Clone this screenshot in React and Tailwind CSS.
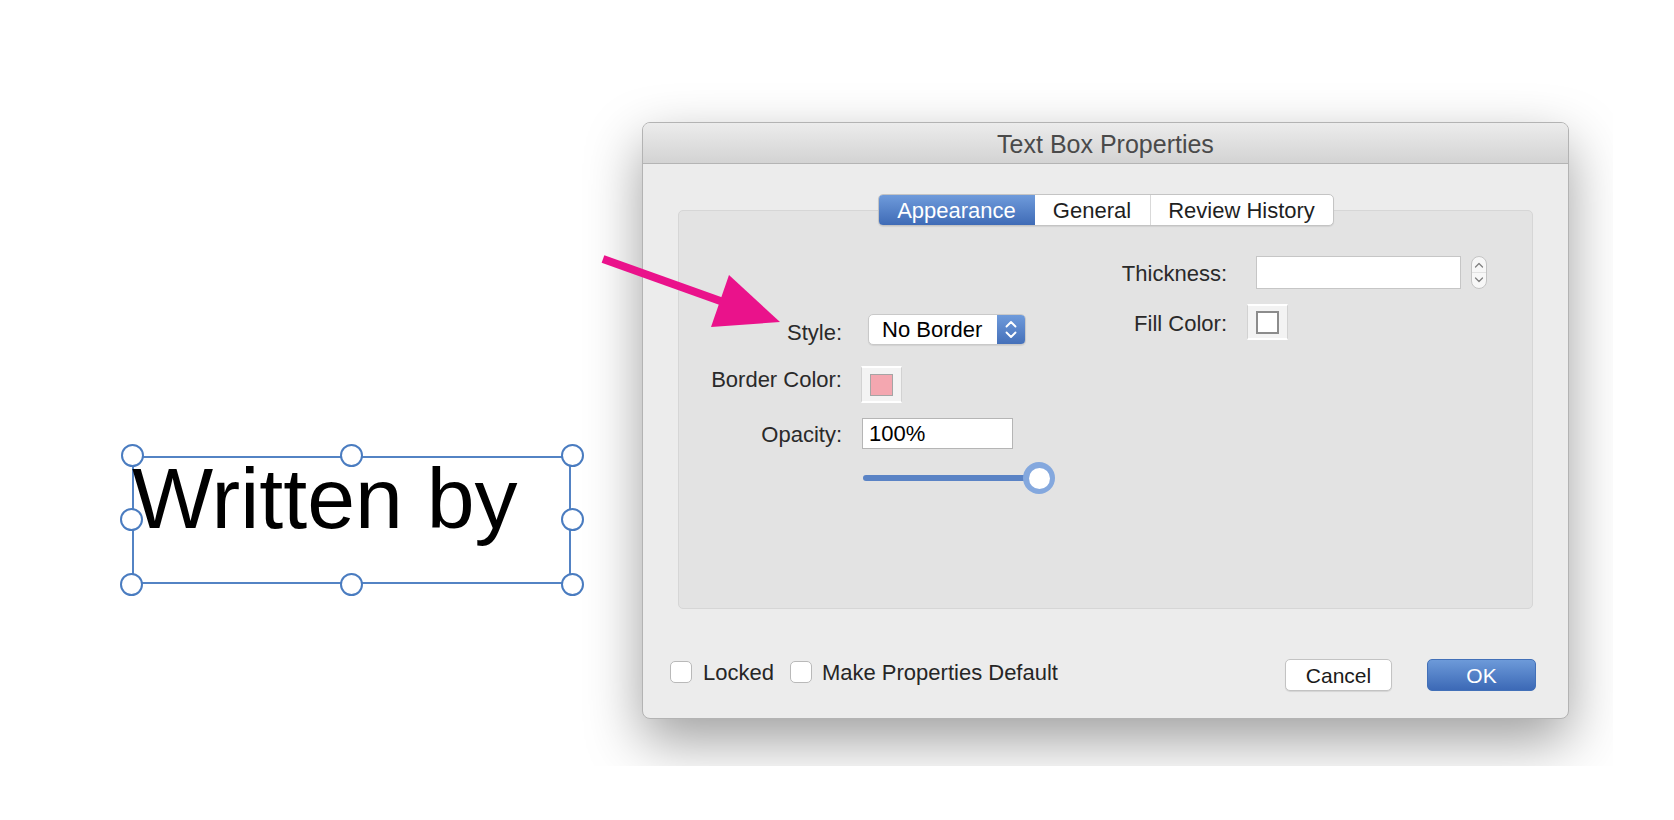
import React from "react";

function Handle({ cls }) {
  return (
    <div
      className={`absolute w-[23px] h-[23px] rounded-full border-2 border-[#4a7cc0] bg-white ${cls}`}
    />
  );
}

function UpDownWhite() {
  return (
    <svg width="28" height="31" viewBox="0 0 28 31" fill="none">
      <path d="M9.5 12.5 L14 8 L18.5 12.5" stroke="white" strokeWidth="1.9" strokeLinecap="round" strokeLinejoin="round" />
      <path d="M9.5 18.5 L14 23 L18.5 18.5" stroke="white" strokeWidth="1.9" strokeLinecap="round" strokeLinejoin="round" />
    </svg>
  );
}

function Stepper() {
  return (
    <svg width="16" height="33" viewBox="0 0 16 33" fill="none">
      <rect x="0.5" y="0.5" width="15" height="32" rx="7.5" fill="#f7f7f7" stroke="#c4c4c4" />
      <line x1="1" y1="16.5" x2="15" y2="16.5" stroke="#e2e2e2" />
      <path d="M4.5 11 L8 7.5 L11.5 11" stroke="#808080" strokeWidth="1.3" strokeLinecap="round" strokeLinejoin="round" />
      <path d="M4.5 22 L8 25.5 L11.5 22" stroke="#808080" strokeWidth="1.3" strokeLinecap="round" strokeLinejoin="round" />
    </svg>
  );
}

export default function App() {
  return (
    <div className="relative w-[1674px] h-[820px] bg-white overflow-hidden font-['Liberation_Sans',Arial,sans-serif]">
      {/* Text box on canvas */}
      <div className="absolute left-[132px] top-[456px] w-[439px] h-[128px] border-2 border-[#5383c4]">
        <div className="ml-[-2px] mt-[-3px] text-[86px] leading-none text-black whitespace-nowrap">
          Written by
        </div>
        <Handle cls="left-[-13px] top-[-14px]" />
        <Handle cls="left-[206px] top-[-14px]" />
        <Handle cls="left-[427px] top-[-14px]" />
        <Handle cls="left-[-14px] top-[50px]" />
        <Handle cls="left-[427px] top-[50px]" />
        <Handle cls="left-[-14px] top-[115px]" />
        <Handle cls="left-[206px] top-[115px]" />
        <Handle cls="left-[427px] top-[115px]" />
      </div>

      {/* Window with shadow, cropped */}
      <div className="absolute left-[582px] top-[40px] w-[1031px] h-[726px] overflow-hidden pl-[60px] pt-[82px]">
        <div className="w-[927px] h-[597px] rounded-[8px] border border-[#b3b3b3] bg-[#ececec] shadow-[0_22px_55px_rgba(0,0,0,0.38)] flex flex-col">
          {/* Title bar */}
          <div className="h-[41px] shrink-0 rounded-t-[7px] border-b border-[#b4b4b4] bg-gradient-to-b from-[#ececec] to-[#d3d3d3] flex justify-center pt-[7px]">
            <span className="text-[25px] leading-[29px] text-[#4a4a4a]">Text Box Properties</span>
          </div>

          {/* Body */}
          <div className="flex flex-col pt-[30px]">
            {/* Tabs */}
            <div className="relative z-10 flex justify-center">
              <div className="flex h-[32px] rounded-[5px] border border-[#c4c4c4] bg-white overflow-hidden shadow-[0_1px_1px_rgba(0,0,0,0.08)]">
                <div className="w-[156px] flex items-center justify-center bg-gradient-to-b from-[#6f9bdb] to-[#3f6bb6] text-white text-[22px] leading-[25px]">
                  Appearance
                </div>
                <div className="w-[116px] flex items-center justify-center border-r border-[#d9d9d9] text-[#1f1f1f] text-[22px] leading-[25px]">
                  General
                </div>
                <div className="w-[182px] flex items-center justify-center text-[#1f1f1f] text-[22px] leading-[25px]">
                  Review History
                </div>
              </div>
            </div>

            {/* Panel */}
            <div className="mx-[35px] mt-[-16px] h-[399px] rounded-[5px] bg-[#e3e3e3] border border-[#d6d6d6] flex text-[22px] leading-[25px] text-[#2a2a2a]">
              {/* Left column */}
              <div className="w-[400px] pt-[103px] flex flex-col">
                <div className="flex h-[31px]">
                  <div className="w-[163px] text-right pt-[6px]">Style:</div>
                  <div className="ml-[26px] w-[158px] h-[31px] flex rounded-[5px] bg-white border border-[#c9c9c9] shadow-[0_1px_1px_rgba(0,0,0,0.08)] overflow-hidden">
                    <div className="flex-1 pl-[13px] flex items-center text-black">No Border</div>
                    <div className="w-[28px] bg-gradient-to-b from-[#6f9bdb] to-[#4570b9] flex items-center justify-center">
                      <UpDownWhite />
                    </div>
                  </div>
                </div>

                <div className="flex h-[37px] mt-[21px]">
                  <div className="w-[163px] text-right pt-[1px]">Border Color:</div>
                  <div className="ml-[19px] w-[41px] h-[37px] bg-[#f3f3f3] border-x border-[#d2d2d2] border-y-2 border-y-white flex items-center justify-center">
                    <div className="w-[23px] h-[22px] bg-[#f4a7b0] border border-[#a5a5a5]" />
                  </div>
                </div>

                <div className="flex h-[31px] mt-[15px]">
                  <div className="w-[163px] text-right pt-[4px]">Opacity:</div>
                  <div className="ml-[20px] w-[151px] h-[31px] bg-white border border-[#b5b5b5] pl-[6px] flex items-center text-black">
                    100%
                  </div>
                </div>

                <div className="flex h-[32px] mt-[13px]">
                  <div className="w-[163px]" />
                  <div className="relative ml-[21px] w-[192px] h-[32px]">
                    <div className="absolute left-0 top-[13px] w-[178px] h-[6px] rounded-full bg-[#5a83c5]" />
                    <div className="absolute left-[160px] top-0 w-[32px] h-[32px] rounded-full bg-[#84a8de] flex items-center justify-center">
                      <div className="w-[21px] h-[21px] rounded-full bg-white" />
                    </div>
                  </div>
                </div>
              </div>

              {/* Right column */}
              <div className="pt-[45px] flex flex-col">
                <div className="flex h-[33px]">
                  <div className="w-[148px] text-right pt-[5px]">Thickness:</div>
                  <div className="ml-[29px] w-[205px] h-[33px] bg-white border border-[#c6c6c6]" />
                  <div className="ml-[10px]">
                    <Stepper />
                  </div>
                </div>
                <div className="flex h-[36px] mt-[15px]">
                  <div className="w-[148px] text-right pt-[7px]">Fill Color:</div>
                  <div className="ml-[20px] w-[41px] h-[36px] bg-[#f3f3f3] border-x border-[#d2d2d2] border-y-2 border-y-white flex items-center justify-center">
                    <div className="w-[23px] h-[23px] bg-white border-2 border-[#8c8c8c]" />
                  </div>
                </div>
              </div>
            </div>

            {/* Bottom row */}
            <div className="mt-[50px] h-[32px] flex items-start text-[22px] leading-[25px] text-[#262626]">
              <div className="ml-[27px] mt-[2px] w-[22px] h-[22px] rounded-[5px] bg-white border border-[#b9b9b9]" />
              <div className="ml-[11px] mt-[1px]">Locked</div>
              <div className="ml-[16px] mt-[2px] w-[22px] h-[22px] rounded-[5px] bg-white border border-[#b9b9b9]" />
              <div className="ml-[10px] mt-[1px]">Make Properties Default</div>
              <div className="ml-auto flex gap-[35px] mr-[32px]">
                <div className="w-[107px] h-[32px] rounded-[5px] bg-white border border-[#c3c3c3] shadow-[0_1px_1px_rgba(0,0,0,0.1)] flex items-center justify-center text-[21px] leading-[25px] text-[#1a1a1a]">
                  Cancel
                </div>
                <div className="w-[109px] h-[32px] rounded-[5px] bg-gradient-to-b from-[#6d9ad9] to-[#3c69b6] border border-[#4270b8] flex items-center justify-center text-[21px] leading-[25px] text-white">
                  OK
                </div>
              </div>
            </div>
          </div>
        </div>
      </div>

      {/* Annotation arrow */}
      <svg
        className="absolute left-[590px] top-[250px] pointer-events-none"
        width="200"
        height="90"
        viewBox="0 0 200 90"
      >
        <line x1="13" y1="9" x2="136" y2="53" stroke="#ea128b" strokeWidth="8" />
        <polygon points="190,72 139,25 121,77" fill="#ea128b" />
      </svg>
    </div>
  );
}
